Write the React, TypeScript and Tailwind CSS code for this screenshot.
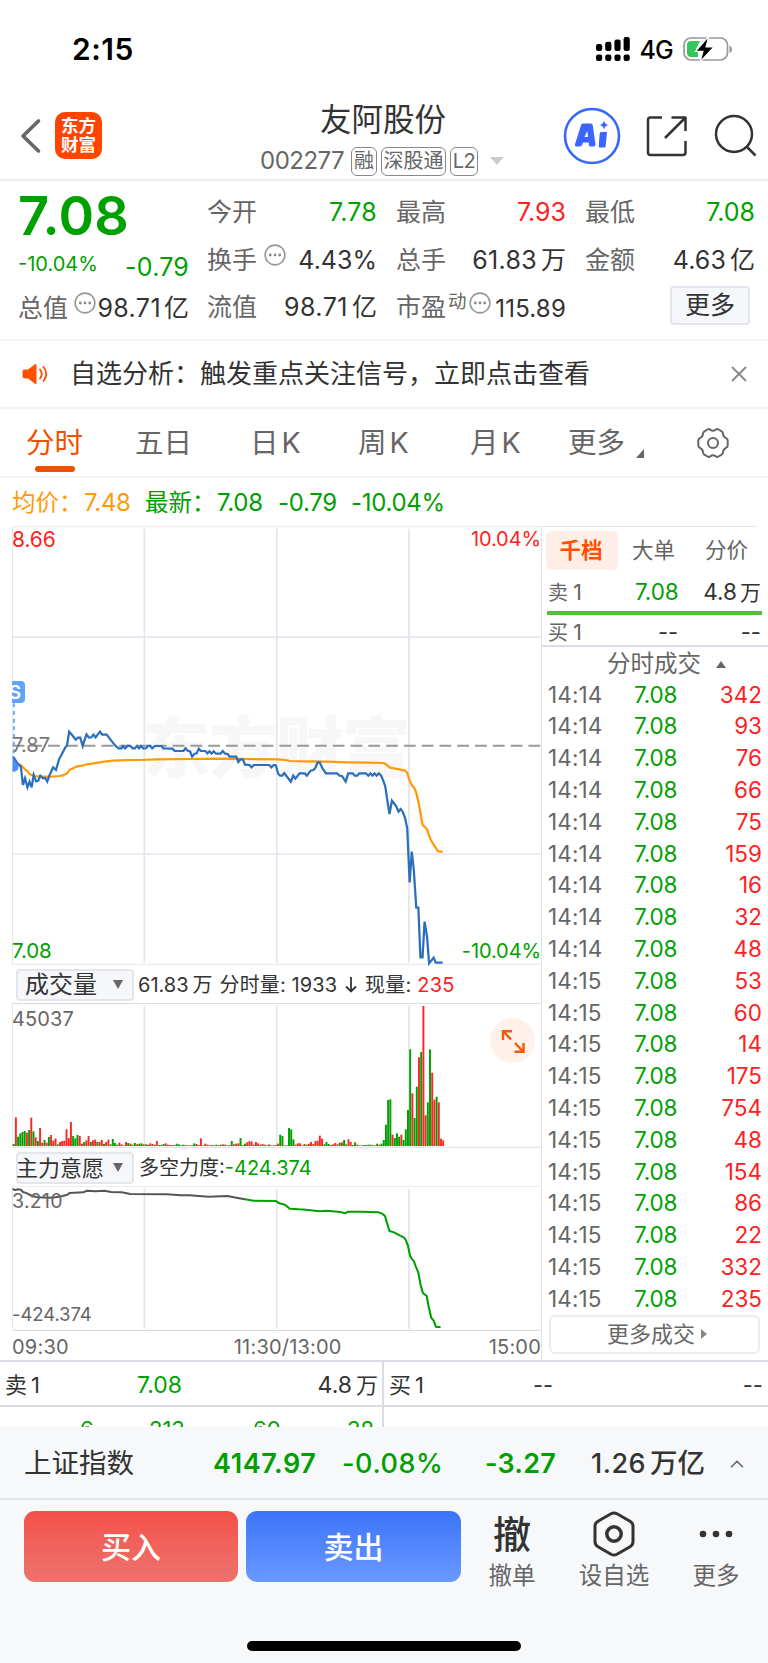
import { X, ChevronUp } from 'lucide-react';

const pricePoints =
  '38,740 50,760 60,770 66,825 72,805 79,832 85,815 91,832 97,795 104,814 110,812 116,797 124,805 130,804 136,815 142,797 153,772 161,780 170,748 180,728 188,712 193,706 199,665 205,672 212,681 218,689 224,683 231,683 238,708 244,688 249,673 256,683 263,682 269,674 275,682 281,674 288,665 294,674 307,674 313,682 331,706 341,715 350,715 354,708 360,715 368,707 375,708 382,715 388,715 394,708 400,715 406,708 413,716 420,715 426,708 432,707 438,715 446,708 465,708 470,715 496,716 503,723 528,723 534,715 541,723 547,724 553,740 560,731 566,730 572,716 578,723 591,723 597,730 603,724 609,731 615,724 622,731 635,731 641,723 648,731 655,732 661,740 680,740 686,756 692,748 699,748 705,764 718,765 724,772 730,765 775,765 781,772 788,765 794,766 800,790 806,797 812,797 818,789 837,815 844,797 850,806 862,790 877,790 883,797 894,782 902,780 908,773 914,757 920,757 928,775 938,790 970,790 977,797 984,798 995,815 1002,790 1015,790 1021,797 1028,797 1034,790 1053,790 1060,797 1066,790 1072,797 1078,790 1084,797 1090,790 1097,797 1103,812 1109,830 1116,880 1121,912 1128,872 1140,888 1147,905 1153,897 1159,905 1166,925 1172,955 1179,1117 1185,1025 1191,1080 1198,1193 1204,1193 1210,1342 1216,1342 1222,1235 1229,1280 1235,1360 1248,1343 1254,1358 1274,1358';

const avgPoints =
  '38,758 60,765 72,778 80,785 86,793 100,798 115,800 150,800 172,798 182,796 194,789 200,780 212,774 222,769 240,766 250,763 270,760 300,755 325,752 360,750.5 400,750 450,748 550,747 620,746 800,748 820,750 835,753 870,754 940,755 1000,757 1060,758 1104,759 1112,764 1122,773 1150,778 1166,782 1172,788 1178,810 1185,825 1192,833 1198,848 1206,885 1216,944 1229,958 1236,980 1243,996 1252,1010 1260,1023 1266,1025 1274,1025';

const forceDark =
  '36,687 44,690 52,688 60,689 66,696 78,700 90,707 108,712 140,713 160,712 180,708 194,704 200,699 240,697 250,692 275,694 300,692 320,696 350,697 375,702 480,703 520,706 545,706 600,710 655,708 680,713 705,718';
const forceGreen =
  '705,718 730,722 794,723 804,730 820,734 834,746 860,748 880,749 920,754 940,752 980,756 993,760 1002,755 1040,755 1090,757 1100,761 1108,768 1114,790 1121,813 1134,817 1150,826 1162,832 1168,840 1174,857 1180,887 1186,898 1191,903 1196,918 1204,938 1210,972 1217,999 1228,1008 1234,1042 1241,1073 1248,1082 1255,1101 1268,1101';

// one value per minute, negative means a falling minute
const volumes = [
  -6, 86, -28, -38, -42, -45, 40, -48, 85, -44, 26, -15, 54, 10, -18, 10, -27, 33, 16, 22, -5, 12, 15, 16, 50, 24, 72, -30, -23, -33, 30, 7, -12, 17, 30, -12,
  17, 19, -12, 13, 18, -6, 12, 19, -5, -21, -9, -4, 10, 5, -2, 12, -9, 7, -4, -9, 5, -7, -8, 5, -5, 4, 8, 6, -4, 15, 3, -3, -6, 8, 4, -3, 3, 3, -7, -5, 2, 4, 3, 2,
  2, -2, -8, 6, 3, 23, 2, 7, 4, 2, 3, -2, -4, 3, -4, 5, 4, 2, 3, -15, 5, 7, 8, -24, 3, -7, 11, 14, 14, 4, 12, 8, 4, 6, 4, 2, 5, 2, 2, 3, 7, -34, -30, -2, -2,
  -54, -50, -20, 4, 8, 8, -2, 6, -4, 7, 12, 6, 15, 16, 31, 22, -5, -12, -6, 3, 5, 9, 5, -10, 11, -18, -5, 20, 12, -3, -11, 4, 2, 2, 3, 3, -4, -4, 3, 2, -7, 4, -7,
  -18, -64, -138, -140, 34, -24, -38, -28, 34, -18, -50, -108, -290, 158, -84, -178, 266, -282, 420, 92, -131, -290, 220, 139, -148, 131, 22, 17,
];

const trades: [string, number][] = [
  ['14:14', 342], ['14:14', 93], ['14:14', 76], ['14:14', 66], ['14:14', 75], ['14:14', 159], ['14:14', 16],
  ['14:14', 32], ['14:14', 48], ['14:15', 53], ['14:15', 60], ['14:15', 14], ['14:15', 175], ['14:15', 754],
  ['14:15', 48], ['14:15', 154], ['14:15', 86], ['14:15', 22], ['14:15', 332], ['14:15', 235],
];

function Dots({ className = '' }: { className?: string }) {
  return (
    <svg viewBox="0 0 22 22" className={`w-[22px] h-[22px] shrink-0 ${className}`}>
      <circle cx="11" cy="11" r="9.9" fill="none" stroke="#999" strokeWidth="1.6" />
      {[6.3, 11, 15.7].map((x) => <circle key={x} cx={x} cy="11" r="1.4" fill="#888" />)}
    </svg>
  );
}

function StatusBar() {
  return (
    <div className="h-[98px] flex items-center pl-[72px] pr-[35px] text-black">
      <span className="text-[30px] font-semibold leading-none tracking-[0.5px]">2:15</span>
      <svg viewBox="0 0 36 26" className="w-[36px] h-[26px] ml-auto mr-[9px]">
        {[0, 1, 2, 3].map((i) => (
          <g key={i}>
            <rect x={1 + i * 9.2} y={8 - i * 2.3} width="6.2" height={7 + i * 2.3} rx="2.2" />
            <rect x={1 + i * 9.2} y="18.500" width="6.2" height="6.500" rx="2.2" />
          </g>
        ))}
      </svg>
      <span className="text-[25px] font-medium leading-none tracking-[-0.8px] mr-[10px] pt-[2px]">4G</span>
      <svg viewBox="0 0 50 26" className="w-[50px] h-[26px]">
        <rect x="1" y="2" width="43.5" height="22" rx="7" fill="none" stroke="#999" strokeWidth="1.7" />
        <path d="M46.5 9.5q2.6 1 2.6 3.7t-2.6 3.7z" fill="#999" />
        <path d="M8 5h9l-4 8 2 2v6H8q-4 0-4-4V9q0-4 4-4z" fill="#34c759" />
        <path d="M26 0 12.5 15.3h7.5L17 26 31 11h-8z" fill="#000" stroke="#fff" strokeWidth="1.2" />
      </svg>
    </div>
  );
}

function Header() {
  return (
    <div className="relative h-[83px] flex items-start justify-between border-b-2 border-[#ececec] pl-[20px] pr-[10px]">
      <div className="flex items-center h-[75px]">
        <svg viewBox="0 0 22 36" className="w-[22px] h-[36px]">
          <path d="M18.500 3 3 18l15.500 15" fill="none" stroke="#666" strokeWidth="3.6" strokeLinecap="round" strokeLinejoin="round" />
        </svg>
        <div className="ml-[13px] w-[47px] h-[47px] rounded-[10px] bg-[#ff4400] text-white font-bold text-[17.500px] leading-[19px] flex flex-col items-center justify-center pb-[1px]">
          <span>东方</span>
          <span>财富</span>
        </div>
      </div>
      <div className="absolute left-[260px] top-[1px] w-[250px]">
        <div className="pl-[60px] h-[42px] flex items-center text-[31.500px] text-[#333] leading-none">友阿股份</div>
        <div className="flex items-center h-[40px] text-[#666]">
          <span className="text-[24px] leading-none tracking-[-0.5px] w-[91px]">002277</span>
          <span className="w-[26px] h-[29px] border-[1.500px] border-[#888] rounded-[6px] text-[20px] leading-none flex items-center justify-center mr-[4px]">融</span>
          <span className="w-[65px] h-[29px] border-[1.500px] border-[#888] rounded-[6px] text-[20px] leading-none flex items-center justify-center mr-[4px]">深股通</span>
          <span className="w-[28px] h-[29px] border-[1.500px] border-[#888] rounded-[6px] text-[20px] leading-none flex items-center justify-center tracking-[-0.5px]">L2</span>
          <svg viewBox="0 0 14 8" className="w-[14px] h-[8px] ml-[12px]"><path d="M0 0h14L7 8z" fill="#ccc" /></svg>
        </div>
      </div>
      <div className="flex items-center h-[76px]">
        <svg viewBox="0 0 58 58" className="w-[58px] h-[58px]">
          <circle cx="29" cy="29" r="27" fill="none" stroke="#3a66ff" strokeWidth="2.6" />
          <path
            d="M19.500 16.500h8q2 0 2.300 2l2.700 19q.2 2-1.800 2h-3q-1.600 0-1.800-1.600l-.3-2.400h-5.500l-.9 2.200q-.7 1.800-2.500 1.800h-3.500q-2 0-1.300-2l6-19q.6-2 1.600-2zM21.500 30h3.500l-.7-6z"
            fill="#3a66ff"
            fillRule="evenodd"
          />
          <path d="M38 25h6l-1.300 14q-.2 1.500-1.700 1.500h-4q-1.500 0-1.300-1.500l1-12q.1-2 1.300-2z" fill="#3a66ff" />
          <path d="M41 13.500q.8 3.700 4.500 4.500-3.700.8-4.500 4.500-.8-3.700-4.500-4.500 3.700-.8 4.500-4.500z" fill="#3a66ff" />
        </svg>
        <svg viewBox="0 0 42 42" className="w-[42px] h-[42px] ml-[25px]" fill="none" stroke="#333" strokeWidth="2.5" strokeLinejoin="round">
          <path d="M16 2.500H4.500Q2 2.500 2 5v32.500Q2 40 4.500 40H37q2.500 0 2.500-2.500V26" />
          <path d="M25.500 2.500h14V16M39 3 19 23" />
        </svg>
        <svg viewBox="0 0 44 44" className="w-[44px] h-[44px] ml-[26px]" fill="none" stroke="#333" strokeWidth="2.500">
          <circle cx="20" cy="20" r="18" />
          <path d="M32.500 32.500 41.500 41.500" />
        </svg>
      </div>
    </div>
  );
}

function Quote() {
  return (
    <div className="h-[160px] border-b-2 border-[#f3f3f3] flex pl-[18px] pr-[13px] text-[25px] leading-none text-[#333] whitespace-nowrap">
      <div className="w-[171px]">
        <div className="h-[70px] pb-[1px] flex items-center text-[54px] font-semibold text-[#00a000] tracking-[0.2px]">7.08</div>
        <div className="flex justify-between h-[22px] text-[#00a000]">
          <span className="text-[20px] pt-[3px]">-10.04%</span>
          <span className="text-[25px] pt-[4px] tracking-[0.2px]">-0.79</span>
        </div>
        <div className="flex items-center mt-[11px] h-[48px]">
          <span className="text-[#666]">总值</span>
          <Dots className="ml-[6px] -mt-[10px]" />
          <span className="ml-auto tracking-[0.400px]">98.71<span className="ml-[3px] tracking-normal">亿</span></span>
        </div>
      </div>
      <div className="w-[170px] ml-[18px] pt-[8px]">
        <div className="h-[47.500px] flex items-center justify-between"><span className="text-[#666]">今开</span><span className="text-[#00a000] tracking-[0.2px]">7.78</span></div>
        <div className="h-[47.500px] flex items-center"><span className="text-[#666]">换手</span><Dots className="ml-[7px] -mt-[10px]" /><span className="ml-auto">4.43%</span></div>
        <div className="h-[47.500px] flex items-center justify-between"><span className="text-[#666]">流值</span><span className="tracking-[0.5px]">98.71<span className="ml-[4px] tracking-normal">亿</span></span></div>
      </div>
      <div className="w-[170px] ml-[19px] pt-[8px]">
        <div className="h-[47.500px] flex items-center justify-between"><span className="text-[#666]">最高</span><span className="text-[#ff2020]">7.93</span></div>
        <div className="h-[47.500px] flex items-center justify-between"><span className="text-[#666]">总手</span><span className="tracking-[0.3px]">61.83<span className="ml-[4px] tracking-normal">万</span></span></div>
        <div className="h-[47.500px] flex items-center">
          <span className="text-[#666]">市盈</span>
          <span className="text-[18.500px] text-[#666] ml-[2px] -mt-[14px]">动</span>
          <Dots className="ml-[2px] -mt-[10px]" />
          <span className="ml-auto text-[24px] tracking-[0.2px] pt-[2px]">115.89</span>
        </div>
      </div>
      <div className="w-[170px] ml-[19px] pt-[8px]">
        <div className="h-[47.500px] flex items-center justify-between"><span className="text-[#666]">最低</span><span className="text-[#00a000]">7.08</span></div>
        <div className="h-[47.500px] flex items-center justify-between"><span className="text-[#666]">金额</span><span className="tracking-[0.1px]">4.63<span className="ml-[4px] tracking-normal">亿</span></span></div>
        <div className="w-[80px] h-[39px] mt-[2px] ml-[85px] rounded-[4px] border-2 border-[#e2e5ec] bg-[#f6f7fa] flex items-center justify-center">更多</div>
      </div>
    </div>
  );
}

function Notice() {
  return (
    <div className="h-[68px] border-b-2 border-[#f3f3f3] flex items-center pl-[22px] pr-[20px]">
      <svg viewBox="0 0 26 22" className="w-[26px] h-[22px]">
        <path d="M2.500 6.500H6l7-5.200q1.500-.8 1.500 1v17.400q0 1.800-1.500 1L6 15.500H2.500Q.5 15.500.5 13.500v-5q0-2 2-2z" fill="#ff5000" />
        <path d="M18 6.500q3.500 4.500 0 9M21.500 4q5.500 7 0 14" fill="none" stroke="#ff5000" strokeWidth="1.800" strokeLinecap="round" />
      </svg>
      <span className="ml-[22px] text-[26px] leading-none text-[#333] whitespace-nowrap">自选分析：触发重点关注信号，立即点击查看</span>
      <X size={26} strokeWidth={1.7} color="#888" className="ml-auto -mr-[4px]" />
    </div>
  );
}

function Tabs() {
  return (
    <div className="relative h-[69px] border-b-2 border-[#f3f3f3] flex items-center text-[28.500px] leading-none text-[#666] whitespace-nowrap">
      <span className="w-[109px] pl-[26px] pt-[1px] text-[#f05000]">分时</span>
      <span className="w-[116px] pl-[26px] pt-[1px]">五日</span>
      <span className="w-[107px] pl-[25px] pt-[1px]">日<span className="ml-[3px]">K</span></span>
      <span className="w-[112px] pl-[26px] pt-[1px]">周<span className="ml-[3px]">K</span></span>
      <span className="w-[99px] pl-[26px] pt-[1px]">月<span className="ml-[3px]">K</span></span>
      <span className="pl-[25px] pt-[1px]">更多</span>
      <svg viewBox="0 0 8 9" className="w-[8px] h-[9px] ml-[11px] mt-[22px]"><path d="M8 0v9H0z" fill="#666" /></svg>
      <svg viewBox="0 0 34 32" className="w-[34px] h-[32px] ml-[52px]" fill="none" stroke="#666" strokeWidth="2">
        <path d="M11.500 2.500q1.500-1 3 .3 2.500 1.700 5 0 1.500-1.300 3-.3l3.200 1.900q1.300.8 1.300 2.500.2 2.800 3 4.200 1.700.8 1.700 2.400v5q0 1.600-1.700 2.400-2.800 1.400-3 4.200 0 1.700-1.300 2.500l-3.200 1.900q-1.500 1-3-.3-2.500-1.700-5 0-1.500 1.300-3 .3l-3.200-1.900Q7 26.800 7 25.100q-.2-2.800-3-4.200-1.700-.8-1.700-2.400v-5q0-1.600 1.700-2.400 2.800-1.400 3-4.200 0-1.700 1.300-2.500z" />
        <circle cx="17" cy="16" r="5" />
      </svg>
      <div className="absolute left-[35px] bottom-[4px] w-[40px] h-[6px] rounded-[3px] bg-[#f05000]" />
    </div>
  );
}

function Grid({ top, bottom }: { top: number; bottom: number }) {
  return (
    <g stroke="#e2e6ed" strokeWidth="5">
      {[415.500, 796.500, 1177].map((x) => <line key={x} x1={x} x2={x} y1={top + 8} y2={bottom - 6} />)}
    </g>
  );
}

function PriceChart() {
  return (
    <div className="relative h-[438px] text-[21px] leading-none">
      <svg viewBox="0 48 1557 1314" preserveAspectRatio="none" className="w-[541px] h-[438px] block overflow-visible">
        <text x="410" y="786" fontSize="196" fontWeight="900" textLength="772" fill="#f7f7f7">东方财富</text>
        <Grid top={48} bottom={1364} />
        <path d="M36 381.500H1557M36 1032H1557" stroke="#e2e6ed" strokeWidth="5" />
        <path d="M36 50V1364M36 50H1557M36 1363H1557" stroke="#e2e6ed" strokeWidth="3" />
        <path d="M36 707.500H1557" stroke="#999" strokeWidth="6" strokeDasharray="34 17.200" />
        <polyline points={avgPoints} fill="none" stroke="#ff9a0a" strokeWidth="6.500" strokeLinejoin="round" />
        <polyline points={pricePoints} fill="none" stroke="#2b6fbe" strokeWidth="6.500" />
        <path d="M40 580V735" stroke="#5fa5ff" strokeWidth="5" strokeDasharray="12 11" />
        <path d="M36 758h4a13 13 0 0 1 0 27h-4zM36 735l12 28H36z" fill="#4a90f0" />
      </svg>
      <div className="absolute left-[12px] top-[155px] w-[13px] h-[22px] rounded-r-[4px] bg-[#5fa5ff] overflow-hidden text-white font-semibold text-[19px] flex justify-end pr-[4px] pt-[2px]">S</div>
      <span className="absolute left-[12px] top-[3px] text-[#ff2020] tracking-[-0.1px]">8.66</span>
      <span className="absolute right-0 top-[3px] text-[20px] text-[#ff2020] tracking-[-0.1px]">10.04%</span>
      <span className="absolute left-[12px] top-[209px] text-[#777] text-[20px] tracking-[0.1px]">7.87</span>
      <span className="absolute left-[12px] bottom-[3px] text-[20.500px] text-[#00a000] tracking-[-0.1px]">7.08</span>
      <span className="absolute right-0 bottom-[3px] text-[20px] text-[#00a000] tracking-[-0.1px]">-10.04%</span>
    </div>
  );
}

function VolumeChart() {
  return (
    <div className="relative h-[145px]">
      <svg viewBox="0 129 1557 435" preserveAspectRatio="none" className="w-[541px] h-[145px] block">
        <Grid top={129} bottom={564} />
        <path d="M36 129V558" stroke="#e2e6ed" strokeWidth="3" />
        <path d="M36 130.500H1557M36 562H1557" stroke="#d9dde5" strokeWidth="3" />
        {volumes.map((v, i) => (
          <rect key={i} x={36.5 + i * 6.34} y={558 - Math.abs(v)} width="5.6" height={Math.abs(v)} fill={v > 0 ? '#f82828' : '#00a000'} />
        ))}
      </svg>
      <span className="absolute left-[12px] top-[6px] text-[20px] leading-none text-[#666] tracking-[0.1px]">45037</span>
      <div className="absolute right-[6px] top-[15px] w-[45px] h-[45px] rounded-full bg-[#fef1ea] flex items-center justify-center">
        <svg viewBox="0 0 24 24" className="w-[24px] h-[24px]" fill="none" stroke="#f05a0a" strokeWidth="2.400">
          <path d="M2 11V2.200h9M2.500 2.500l7.500 8M22.500 14v8.800h-9M22 22.500l-8-8.500" />
        </svg>
      </div>
    </div>
  );
}

function ForceChart() {
  return (
    <div className="relative h-[145px] text-[19px] leading-none text-[#666]">
      <svg viewBox="0 678 1557 435" preserveAspectRatio="none" className="w-[541px] h-[145px] block">
        <Grid top={678} bottom={1112} />
        <path d="M36 678V1106M36 679H1557" stroke="#e2e6ed" strokeWidth="3" />
        <path d="M36 1111H1557" stroke="#d9dde5" strokeWidth="4" />
        <polyline points={forceDark} fill="none" stroke="#555" strokeWidth="6" strokeLinejoin="round" />
        <polyline points={forceGreen} fill="none" stroke="#00a000" strokeWidth="6" strokeLinejoin="round" />
      </svg>
      <span className="absolute left-[12px] top-[6px] text-[19.500px] tracking-[0.3px]">3.210</span>
      <span className="absolute left-[12px] bottom-[8px] text-[18.500px] tracking-[-0.1px]">-424.374</span>
    </div>
  );
}

function Select({ label }: { label: string }) {
  return (
    <div className="ml-[16px] w-[118px] h-[32px] rounded-[4px] border-2 border-[#e4e6eb] bg-[#f6f7fa] flex items-center justify-between pr-[9px] text-[#333] whitespace-nowrap">
      <span className={label.length > 3 ? 'text-[22px] -ml-[2px]' : 'text-[24px] pl-[7px]'}>{label}</span>
      <svg viewBox="0 0 10 9" className="w-[10px] h-[9px]"><path d="M0 0h10L5 9z" fill="#666" /></svg>
    </div>
  );
}

function OrderPanel() {
  return (
    <div className="w-[227px] border-l border-[#dfe3ea] leading-none">
      <div className="mr-[11px] h-[5px] border-t border-[#e2e6ed]" />
      <div className="h-[39px] flex items-center text-[21.500px] text-[#666]">
        <span className="ml-[4px] w-[72px] h-[39px] rounded-[6px] bg-[#ffeee6] text-[#ff5000] font-bold flex items-center justify-center pr-[2px]">千档</span>
        <span className="ml-[14px]">大单</span>
        <span className="ml-[30px]">分价</span>
      </div>
      <div className="h-[41px] pt-[3px] pl-[6px] pr-[7px] flex items-center text-[22.500px] text-[#333]">
        <span className="w-[87px] text-[#666] text-[20px]">卖<span className="ml-[5px] text-[22px]">1</span></span>
        <span className="text-[#00a000] tracking-[-0.1px]">7.08</span>
        <span className="ml-auto">4.8<span className="ml-[3px] text-[21px]">万</span></span>
      </div>
      <div className="ml-[5px] mr-[6px] h-[4px] bg-[#54bd3c]" />
      <div className="h-[32px] pl-[6px] pr-[7px] pt-[3px] flex items-center text-[22px] text-[#333] border-b-2 border-[#d9dde5]">
        <span className="w-[110px] text-[#666] text-[20px]">买<span className="ml-[5px] text-[22px]">1</span></span>
        <span>--</span>
        <span className="ml-auto">--</span>
      </div>
      <div className="h-[32px] pl-[65px] pt-[2px] flex items-center text-[23.500px] text-[#666]">
        分时成交
        <svg viewBox="0 0 10 7" className="w-[10px] h-[7px] ml-[15px]"><path d="M0 7h10L5 0z" fill="#666" /></svg>
      </div>
      {trades.map(([time, vol], i) => (
        <div key={i} className="h-[31.800px] pl-[6px] pr-[6px] flex items-center text-[22.500px]">
          <span className="w-[86px] text-[#666] tracking-[0.1px]">{time}</span>
          <span className="text-[#00a000] tracking-[-0.2px]">7.08</span>
          <span className="ml-auto text-[#ff2020]">{vol}</span>
        </div>
      ))}
      <div className="ml-[7px] mr-[8px] h-[39px] pl-[5px] rounded-[6px] border-2 border-[#ececec] flex items-center justify-center text-[22px] text-[#666]">
        更多成交
        <svg viewBox="0 0 6 10" className="w-[6px] h-[10px] ml-[6px]"><path d="M0 0v10l6-5z" fill="#888" /></svg>
      </div>
    </div>
  );
}

function DepthTable() {
  return (
    <div className="h-[67px] border-t-2 border-[#d9dbe3] text-[22px] leading-none text-[#333]">
      <div className="flex h-[45px] border-b-2 border-[#d9dbe3]">
        <div className="w-[384px] border-r-2 border-[#d9dbe3] flex items-center pt-[3px] pl-[5px] pr-[4px]">
          <span className="w-[132px]">卖<span className="ml-[4px]">1</span></span>
          <span className="text-[#00a000] text-[23px]">7.08</span>
          <span className="ml-auto text-[23px]">4.8<span className="ml-[4px] text-[22px]">万</span></span>
        </div>
        <div className="flex-1 flex items-center pt-[3px] pl-[5px] pr-[5px]">
          <span className="w-[144px]">买<span className="ml-[4px]">1</span></span>
          <span>--</span>
          <span className="ml-auto">--</span>
        </div>
      </div>
      {/* next row slides under the index bar */}
      <div className="w-[384px] h-[20px] border-r-2 border-[#d9dbe3] overflow-hidden flex pt-[11px] pl-[80px] text-[22px] text-[#00a000]">
        <span className="w-[69px]">6</span>
        <span className="w-[104px]">213</span>
        <span className="w-[94px]">60</span>
        <span>38</span>
      </div>
    </div>
  );
}

function Footer() {
  return (
    <div className="h-[236px] bg-[#f7f8fa] leading-none text-[#333]">
      <div className="h-[73px] border-b-2 border-[#e4e6e9] flex items-center pt-[2px] pl-[24px] pr-[20px] text-[27px] whitespace-nowrap">
        <span className="w-[189px] text-[27.500px]">上证指数</span>
        <span className="w-[129px] font-semibold text-[#00a000] tracking-[0.6px]">4147.97</span>
        <span className="w-[143px] font-medium text-[#00a000] tracking-[0.6px]">-0.08%</span>
        <span className="w-[106px] font-semibold text-[#00a000] tracking-[0.2px]">-3.27</span>
        <span className="font-medium tracking-[0.5px]">1.26<span className="ml-[4px] text-[27.500px] tracking-normal">万亿</span></span>
        <ChevronUp size={22} strokeWidth={1.8} color="#666" className="ml-auto" />
      </div>
      <div className="flex pt-[11px] pl-[24px]">
        <div className="w-[214px] h-[71px] rounded-[11px] bg-gradient-to-b from-[#f4504a] to-[#ec736d] text-white text-[30px] font-medium flex items-center justify-center">买入</div>
        <div className="w-[215px] h-[71px] ml-[8px] rounded-[11px] bg-gradient-to-b from-[#3b74f8] to-[#6a98ff] text-white text-[30px] font-medium flex items-center justify-center">卖出</div>
        <div className="w-[60px] ml-[21px] flex flex-col items-center">
          <span className="h-[46px] flex items-center text-[38px] font-medium">撤</span>
          <span className="mt-[7px] text-[23.500px] text-[#666]">撤单</span>
        </div>
        <div className="w-[80px] ml-[32px] flex flex-col items-center">
          <svg viewBox="0 0 44 46" className="w-[44px] h-[46px]" fill="none" stroke="#333" strokeWidth="3">
            <path d="M19 2.800q3-1.600 6 0l13 7.400q3 1.800 3 5v15.600q0 3.200-3 5l-13 7.400q-3 1.600-6 0l-13-7.400q-3-1.800-3-5V15.200q0-3.200 3-5z" />
            <circle cx="22" cy="23" r="7.200" strokeWidth="3.500" />
          </svg>
          <span className="mt-[7px] text-[23.500px] text-[#666] whitespace-nowrap">设自选</span>
        </div>
        <div className="w-[60px] ml-[32px] flex flex-col items-center">
          <svg viewBox="0 0 34 46" className="w-[34px] h-[46px]" fill="#333">
            {[4, 17, 30].map((x) => <circle key={x} cx={x} cy="23" r="3.300" />)}
          </svg>
          <span className="mt-[7px] text-[23.500px] text-[#666]">更多</span>
        </div>
      </div>
      <div className="mx-auto mt-[53px] w-[274px] h-[10px] rounded-full bg-black" />
    </div>
  );
}

export default function App() {
  return (
    <div className="w-[768px] h-[1663px] bg-white overflow-hidden font-['Inter','Noto_Sans_CJK_SC',sans-serif]">
      <StatusBar />
      <Header />
      <Quote />
      <Notice />
      <Tabs />
      <div className="h-[48px] pt-[1px] flex items-center pl-[12px] text-[24px] leading-none text-[#00a000] whitespace-nowrap">
        <span className="w-[72px] text-[#ff9a0a] text-[23.500px]">均价：</span>
        <span className="w-[61px] text-[#ff9a0a] tracking-[-0.3px]">7.48</span>
        <span className="w-[72px] text-[23.500px]">最新：</span>
        <span className="w-[61px] tracking-[-0.3px]">7.08</span>
        <span className="w-[73px] tracking-[-0.3px]">-0.79</span>
        <span className="tracking-[-0.3px]">-10.04%</span>
      </div>
      <div className="flex h-[834px]">
        <div className="w-[541px]">
          <PriceChart />
          <div className="h-[39px] pt-[2px] flex items-center leading-none text-[20px] text-[#333] whitespace-nowrap">
            <Select label="成交量" />
            <span className="ml-[4px]">61.83<span className="ml-[4px]">万</span></span>
            <span className="ml-[7px] tracking-[0.1px]">分时量: 1933</span>
            <svg viewBox="0 0 12 16" className="w-[12px] h-[16px] mx-[8px]" fill="none" stroke="#333" strokeWidth="1.800"><path d="M6 0v14.500M1 9.500l5 5 5-5" /></svg>
            <span className="tracking-[0.2px]">现量: <span className="text-[#ff2020]">235</span></span>
          </div>
          <VolumeChart />
          <div className="h-[38px] pt-[1px] flex items-center leading-none text-[20px] text-[#333] whitespace-nowrap">
            <Select label="主力意愿" />
            <span className="ml-[5px]">多空力度:<span className="text-[#00a000]">-424.374</span></span>
          </div>
          <ForceChart />
          <div className="h-[29px] pt-[2px] pl-[12px] flex items-center justify-between text-[20px] leading-none text-[#666] tracking-[0.2px]">
            <span>09:30</span>
            <span className="-mr-[18px]">11:30/13:00</span>
            <span>15:00</span>
          </div>
        </div>
        <OrderPanel />
      </div>
      <DepthTable />
      <Footer />
    </div>
  );
}
